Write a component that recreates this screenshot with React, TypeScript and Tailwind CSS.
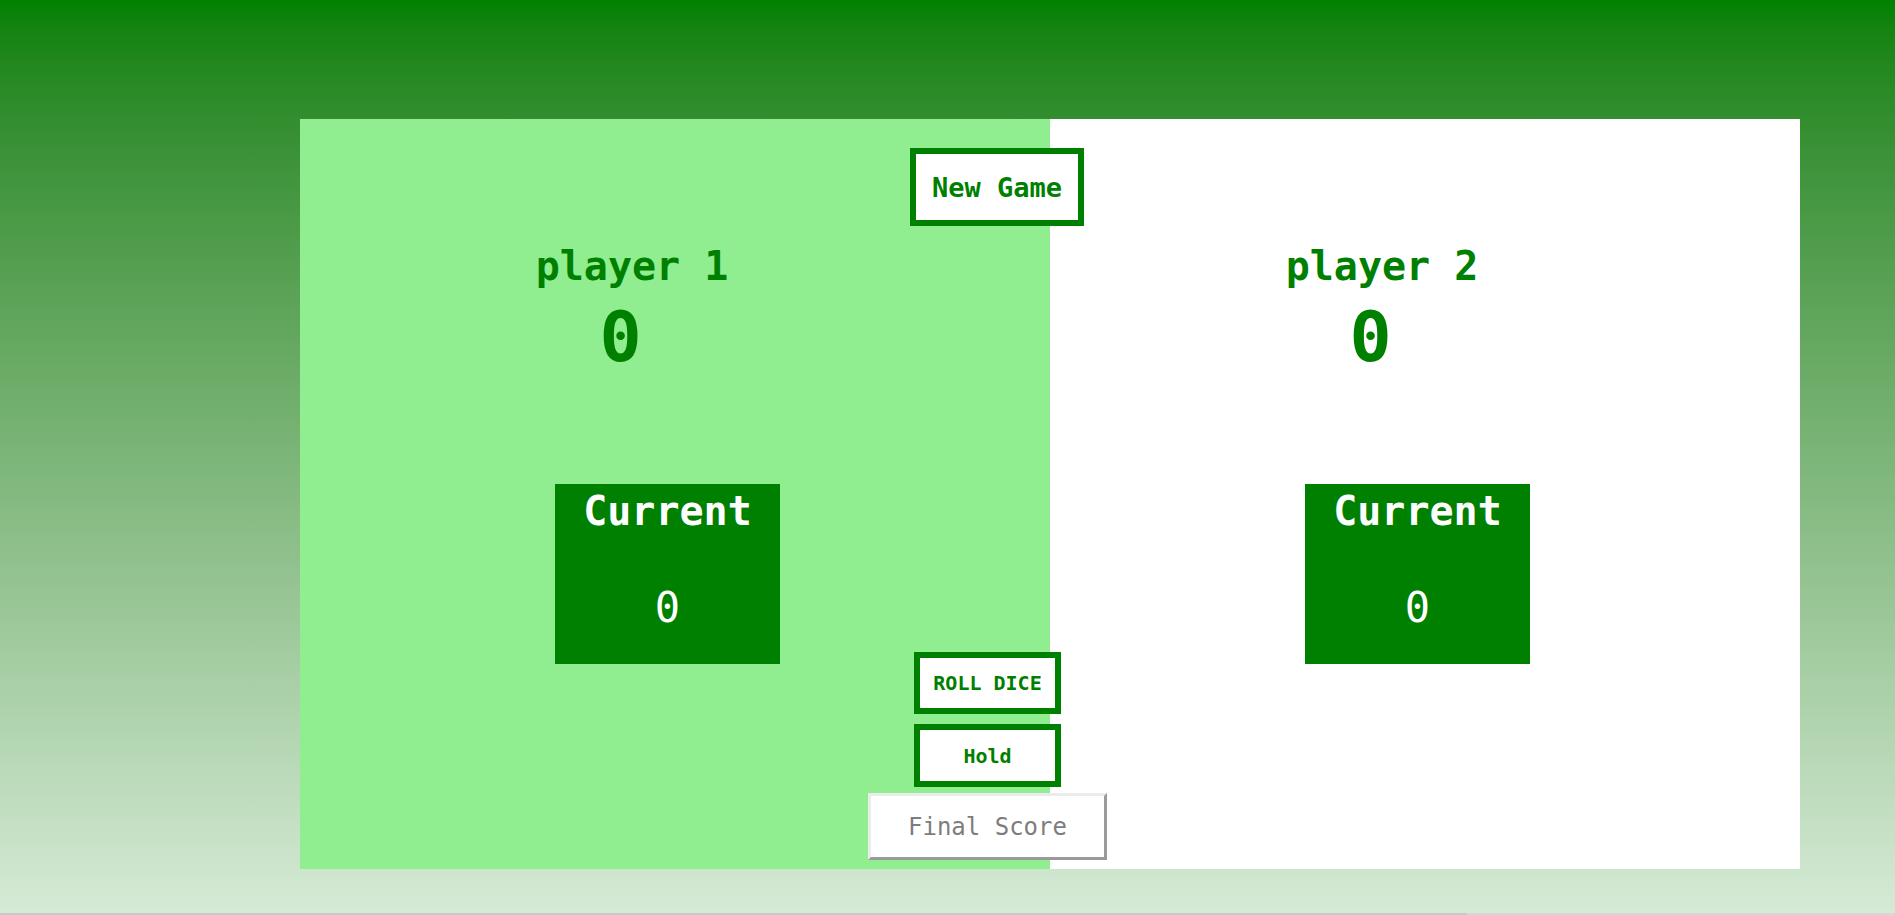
import React from 'react';

function PlayerSide({ name, light }: { name: string; light?: boolean }) {
  return (
    <section
      className={`w-[750px] h-full flex flex-col pt-[127px] ${light ? 'bg-[#90ee90]' : 'bg-white'}`}
    >
      <h2 className="pr-[86px] text-center text-[40px] leading-none font-bold text-[#008000]">
        {name}
      </h2>
      <p className="mt-[16px] pr-[109px] text-center text-[70px] leading-none font-bold text-[#008000]">
        0
      </p>
      <div className="ml-[255px] mt-[112px] w-[225px] h-[180px] bg-[#008000] flex flex-col items-center pt-[7px] text-white">
        <h3 className="text-[40px] leading-none font-bold">Current</h3>
        <p className="mt-[56px] text-[42px] leading-none">0</p>
      </div>
    </section>
  );
}

export default function App() {
  return (
    <div className="h-[915px] flex flex-col overflow-hidden font-['DejaVu_Sans_Mono',monospace]">
      <div className="flex-1 bg-linear-to-b from-[#008000] to-[#d6ead6] pt-[119px] pl-[300px]">
        <main className="relative flex w-[1500px] h-[750px]">
          <PlayerSide name="player 1" light />
          <PlayerSide name="player 2" />

          {/* New game button sits over the seam */}
          <button className="absolute left-[610px] top-[29px] w-[174px] h-[78px] border-[6px] border-[#008000] bg-white text-[27px] font-bold text-[#008000] leading-none">
            New Game
          </button>

          <div className="absolute left-[568px] top-[533px] w-[239px] flex flex-col items-center">
            <button className="w-[147px] h-[62px] border-[6px] border-[#008000] bg-white text-[20px] font-bold text-[#008000] leading-none">
              ROLL DICE
            </button>
            <button className="mt-[10px] w-[147px] h-[63px] border-[6px] border-[#008000] bg-white text-[20px] font-bold text-[#008000] leading-none">
              Hold
            </button>
            <button className="mt-[6px] w-[239px] h-[67px] border-[3px] border-t-[#ebebeb] border-l-[#ebebeb] border-b-[#9a9a9a] border-r-[#9a9a9a] bg-white text-[24px] text-[#7d7d7d] leading-none">
              Final Score
            </button>
          </div>
        </main>
      </div>
      <div className="h-[2px] flex">
        <div className="w-[1467px] bg-[#c8c8c8]" />
        <div className="flex-1 bg-[#d7d7d7]" />
      </div>
    </div>
  );
}
